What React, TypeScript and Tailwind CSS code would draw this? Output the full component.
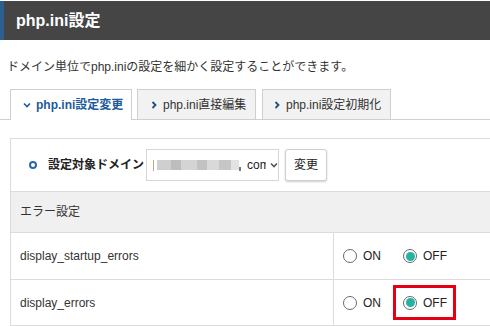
import React from "react";

const font = "font-['Liberation_Sans','Noto_Sans_CJK_JP',sans-serif]";

function Chevron({ dir, className }: { dir: "down" | "right"; className?: string }) {
  return (
    <svg width="8" height="8" viewBox="0 0 8 8" className={className}>
      {dir === "down" ? (
        <path d="M1 2.5 L4 5.5 L7 2.5" fill="none" stroke="currentColor" strokeWidth="1.6" />
      ) : (
        <path d="M2.5 1 L5.5 4 L2.5 7" fill="none" stroke="currentColor" strokeWidth="1.8" />
      )}
    </svg>
  );
}

function Radio({ checked }: { checked?: boolean }) {
  return (
    <span className="flex h-[14px] w-[14px] items-center justify-center rounded-full border border-[#6b6b6b] bg-white">
      {checked && <span className="h-[9px] w-[9px] rounded-full bg-[#25b2a2]" />}
    </span>
  );
}

function OnOff({ highlight }: { highlight?: boolean }) {
  return (
    <div className="flex items-center pl-[9px] text-[12px] text-[#222]">
      <label className="flex items-center gap-[6px]">
        <Radio />
        ON
      </label>
      <label className="relative ml-[22px] flex items-center gap-[6px]">
        <Radio checked />
        OFF
        {highlight && (
          <span className="absolute -top-[9px] -bottom-[8px] -left-[10px] -right-[9px] border-[3px] border-[#e50012]" />
        )}
      </label>
    </div>
  );
}

export default function App() {
  return (
    <div className={`h-[326px] w-[490px] overflow-hidden bg-white ${font}`}>
      <div className="mt-[1px] flex h-[39px] items-center border-l-[4px] border-[#2c5f90] bg-[#454545] pl-[12px] text-[16px] font-bold text-white">
        php.ini設定
      </div>

      <p className="mt-[18px] pl-[7px] text-[12px] leading-[18px] text-[#333]">
        ドメイン単位でphp.iniの設定を細かく設定することができます。
      </p>

      <div className="mt-[13px] flex border-b border-[#cfcfcf] pl-[10px] text-[12px]">
        <div className="-mb-px flex h-[31px] w-[122px] items-center gap-[5px] border border-b-0 border-[#cfcfcf] bg-white pl-[12px] font-bold text-[#1d5b9b]">
          <Chevron dir="down" />
          php.ini設定変更
        </div>
        <div className="ml-[5px] flex h-[30px] w-[119px] items-center gap-[5px] border border-b-0 border-[#cfcfcf] bg-[#f2f2f2] pl-[12px] text-[#333]">
          <Chevron dir="right" className="text-[#1d4f80]" />
          php.ini直接編集
        </div>
        <div className="ml-[6px] flex h-[30px] w-[129px] items-center gap-[5px] border border-b-0 border-[#cfcfcf] bg-[#f2f2f2] pl-[10px] text-[#333]">
          <Chevron dir="right" className="text-[#1d4f80]" />
          php.ini設定初期化
        </div>
      </div>

      <div className="ml-[10px] mt-[18px] border-l border-t border-[#dcdcdc] text-[12px] text-[#333]">
        <div className="flex h-[53px] items-center border-b border-[#dcdcdc] pl-[18px]">
          <span className="h-[8px] w-[8px] rounded-full border-2 border-[#2a68a8]" />
          <span className="ml-[11px] font-bold text-[#222]">設定対象ドメイン</span>
          <div className="ml-[2px] flex h-[32px] w-[133px] items-center border border-[#d6d6d6] bg-white pl-[6px]">
            <span className="h-[11px] w-[1px] bg-[#c9a57a]" />
            <div className="ml-[3px] flex h-[11px] items-center blur-[0.6px]">
              <span className="h-[10px] w-[14px] bg-[#cfcfcf]" />
              <span className="h-[10px] w-[10px] bg-[#bdbdbd]" />
              <span className="h-[10px] w-[16px] bg-[#d4d4d4]" />
              <span className="h-[10px] w-[10px] bg-[#c2c2c2]" />
              <span className="h-[10px] w-[12px] bg-[#d9d9d9]" />
              <span className="h-[10px] w-[12px] bg-[#c6c6c6]" />
              <span className="h-[10px] w-[8px] bg-[#e2e2e2]" />
              <span className="h-[4px] w-[2px] self-end bg-[#777]" />
            </div>
            <span className="ml-[6px] w-[19px] overflow-hidden whitespace-nowrap text-[#222]">com</span>
            <Chevron dir="down" className="ml-[4px] text-[#555]" />
          </div>
          <button className="ml-[6px] h-[32px] w-[42px] rounded-[3px] border border-[#d0d0d0] bg-white text-[12px] text-[#222] shadow-[0_1px_2px_rgba(0,0,0,0.2)]">
            変更
          </button>
        </div>

        <div className="flex h-[41px] items-center border-b border-[#dcdcdc] bg-[#f0f0f0] pl-[9px]">
          エラー設定
        </div>

        <div className="flex h-[47px] border-b border-[#dcdcdc]">
          <div className="flex w-[323px] items-center border-r border-[#dcdcdc] pl-[9px]">
            display_startup_errors
          </div>
          <OnOff />
        </div>

        <div className="flex h-[46px] border-b border-[#dcdcdc]">
          <div className="flex w-[323px] items-center border-r border-[#dcdcdc] pl-[9px]">
            display_errors
          </div>
          <OnOff highlight />
        </div>
      </div>
    </div>
  );
}
